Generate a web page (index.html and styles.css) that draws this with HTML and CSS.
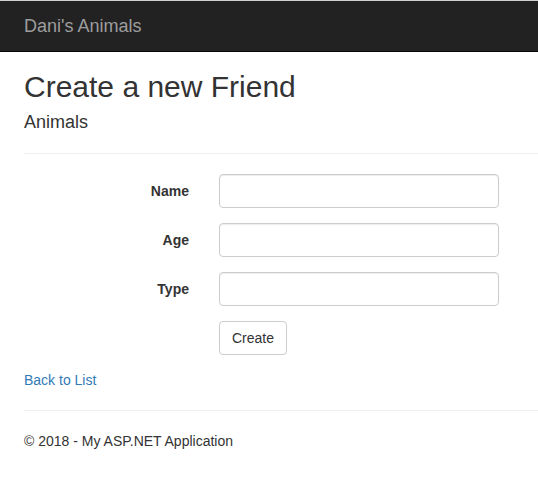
FILE: index.html
```html
<!DOCTYPE html>
<html>
<head>
<meta charset="utf-8">
<title>Create - Dani's Animals</title>
<link rel="stylesheet" href="styles.css">
</head>
<body>
<div class="topline"></div>
<nav class="navbar">
  <a class="brand" href="#">Dani's Animals</a>
</nav>
<main class="content">
  <h2 class="title">Create a new Friend</h2>
  <h4 class="subtitle">Animals</h4>
  <hr class="rule">
  <form class="form">
    <div class="form-group">
      <label class="label" for="name">Name</label>
      <input class="control" id="name" type="text">
    </div>
    <div class="form-group">
      <label class="label" for="age">Age</label>
      <input class="control" id="age" type="text">
    </div>
    <div class="form-group">
      <label class="label" for="type">Type</label>
      <input class="control" id="type" type="text">
    </div>
    <div class="form-group">
      <span class="label"></span>
      <button class="btn" type="button">Create</button>
    </div>
  </form>
  <div class="back"><a class="link" href="#">Back to List</a></div>
  <hr class="rule">
  <footer class="footer"><p class="copy">© 2018 - My ASP.NET Application</p></footer>
</main>
</body>
</html>
```
FILE: styles.css
```css
* { box-sizing: border-box; }
html, body {
  margin: 0;
  padding: 0;
  background: #fff;
}
body {
  font-family: "Liberation Sans", Arial, Helvetica, sans-serif;
  font-size: 14px;
  line-height: 1.42857143;
  color: #333;
}
.topline {
  height: 1px;
  background: #cfcfcf;
}
.navbar {
  height: 51px;
  background: #222;
  border-bottom: 1px solid #080808;
  padding-left: 24px;
  display: flex;
  align-items: flex-start;
}
.brand {
  display: block;
  padding: 15px 0;
  font-size: 18px;
  line-height: 20px;
  color: #9d9d9d;
  text-decoration: none;
}
.content {
  padding: 0 0 20px 24px;
}
.title {
  margin: 18px 0 10px;
  font-size: 30px;
  font-weight: 500;
  line-height: 1.1;
}
.subtitle {
  margin: 10px 0 10px;
  font-size: 18px;
  font-weight: 500;
  line-height: 1.1;
}
.rule {
  margin: 20px 0;
  border: 0;
  border-top: 1px solid #eee;
  height: 0;
}
.form {
  margin: 0;
}
.form-group {
  display: flex;
  gap: 30px;
  margin-bottom: 15px;
}
.label {
  width: 165px;
  flex: none;
  text-align: right;
  font-weight: bold;
  padding-top: 7px;
  line-height: 20px;
}
.control {
  width: 280px;
  height: 34px;
  padding: 6px 12px;
  font-family: inherit;
  font-size: 14px;
  color: #555;
  background: #fff;
  border: 1px solid #ccc;
  border-radius: 4px;
  box-shadow: inset 0 1px 1px rgba(0,0,0,.075);
  margin: 0;
}
.btn {
  height: 34px;
  padding: 6px 12px;
  font-family: inherit;
  font-size: 14px;
  line-height: 20px;
  color: #333;
  background: #fff;
  border: 1px solid #ccc;
  border-radius: 4px;
  margin: 0;
}
.back {
  line-height: 20px;
}
.link {
  color: #337ab7;
  text-decoration: none;
}
.copy {
  margin: 0 0 10px;
}
```
